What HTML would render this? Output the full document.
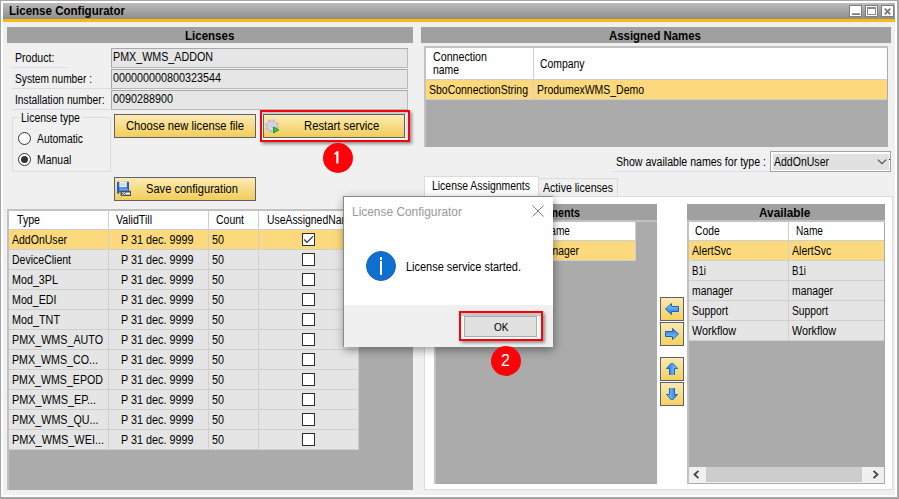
<!DOCTYPE html>
<html><head><meta charset="utf-8"><title>License Configurator</title>
<style>
*{box-sizing:border-box;margin:0;padding:0}
html,body{width:899px;height:499px;overflow:hidden;background:#fff}
body{font-family:"Liberation Sans",sans-serif;font-size:12px;color:#000;position:relative}
.a{position:absolute}
.t{position:absolute;white-space:nowrap;line-height:14px;transform-origin:0 50%}
.tb{position:absolute;top:5px;width:13px;height:12px;background:#fff;border:1px solid #7d7d7d}
.hdr{position:absolute;background:#a0a0a0;height:16px}
.hdr span{position:absolute;left:0;right:0;text-align:center;font-weight:bold;font-size:13px;line-height:16px;top:0}
.fld{position:absolute;left:111px;width:297px;height:20px;background:#e6e6e6;border:1px solid #b7baba;border-top-color:#a6a9a9;border-left-color:#a6a9a9}
.btn{position:absolute;height:24px;border:1px solid #5f6068;background:linear-gradient(#fbeab4,#f7dc86 50%,#f2cd5a)}
.grid{position:absolute;background:#ababab;border-top:2px solid #c2c2c2;border-left:2px solid #c2c2c2}
.c{position:absolute;background:#e5e5e5}
.h{background:#fff}
.s{background:#fcd97c}
.cb{position:absolute;width:13px;height:13px;border:1px solid #2e2e2e;background:#fff}
.red{position:absolute;border:2px solid #fb0007;box-shadow:2px 2px 3px rgba(0,0,0,.4)}
.circ{position:absolute;width:30px;height:30px;border-radius:50%;background:#fd0209;color:#fff;text-align:center;font-size:16px;line-height:30px}
.arrow{position:absolute;left:660px;width:24px;height:24px;border:1px solid #5f6068;background:linear-gradient(#fbe9b0,#f4d160)}
</style></head><body>
<div class="a" style="left:0;top:0;width:899px;height:499px;background:#a5a5a5"></div>
<div class="a" style="left:1px;top:1px;width:896px;height:496px;background:#fff"></div>
<div class="a" style="left:3px;top:3px;width:892px;height:16px;background:linear-gradient(#bbb,#8d8d8d)"></div>
<div class="a" style="left:3px;top:19px;width:892px;height:3px;background:#fdb913"></div>
<div class="a" style="left:3px;top:22px;width:892px;height:473px;background:#f0f0f0"></div>
<div class="t" style="left:9px;top:4px;font-size:12px;transform:scaleX(0.961);font-weight:bold;">License Configurator</div>
<div class="tb" style="left:849px"><div class="a" style="left:2px;top:8px;width:8px;height:1px;background:#7d7d7d;box-shadow:0 -1px 0 #a0a0a0"></div></div>
<div class="tb" style="left:865px"><div class="a" style="left:1px;top:1px;width:9px;height:8px;border:1px solid #8a8a8a;border-top:2px solid #8a8a8a"></div></div>
<div class="tb" style="left:881px"><svg class="a" style="left:2px;top:2px" width="7" height="7" viewBox="0 0 7 7"><path d="M0.7 0.7 L6.3 6.3 M6.3 0.7 L0.7 6.3" stroke="#7a7a7a" stroke-width="1.9"/></svg></div>
<div class="hdr" style="left:7px;top:27px;width:406px"></div>
<div class="t" style="left:184.5px;top:29px;font-size:12px;transform:scaleX(0.96);font-weight:bold;">Licenses</div>
<div class="t" style="left:15px;top:51px;font-size:12px;transform:scaleX(0.881);">Product:</div>
<div class="t" style="left:15px;top:72px;font-size:12px;transform:scaleX(0.849);">System number :</div>
<div class="t" style="left:15px;top:93px;font-size:12px;transform:scaleX(0.855);">Installation number:</div>
<div class="a" style="left:12px;top:67px;width:55px;height:1px;background:#d9dde2"></div>
<div class="a" style="left:12px;top:88px;width:99px;height:1px;background:#d9dde2"></div>
<div class="a" style="left:12px;top:109px;width:99px;height:1px;background:#d9dde2"></div>
<div class="fld" style="top:48px"></div>
<div class="t" style="left:113px;top:50px;font-size:12px;transform:scaleX(0.893);">PMX_WMS_ADDON</div>
<div class="fld" style="top:69px"></div>
<div class="t" style="left:113px;top:71px;font-size:12px;transform:scaleX(0.899);">000000000800323544</div>
<div class="fld" style="top:90px"></div>
<div class="t" style="left:113px;top:92px;font-size:12px;transform:scaleX(0.899);">0090288900</div>
<div class="a" style="left:12px;top:117px;width:99px;height:55px;border:1px solid #dcdcdc"></div>
<div class="a" style="left:19px;top:111px;width:64px;height:14px;background:#f0f0f0"></div>
<div class="t" style="left:21px;top:111px;font-size:12px;transform:scaleX(0.875);">License type</div>
<div class="a" style="left:18px;top:132px;width:13px;height:13px;border:1px solid #333;border-radius:50%;background:#fff"></div>
<div class="a" style="left:18px;top:153px;width:13px;height:13px;border:1px solid #333;border-radius:50%;background:#fff"></div>
<div class="a" style="left:21px;top:156px;width:7px;height:7px;border-radius:50%;background:#333"></div>
<div class="t" style="left:37px;top:132px;font-size:12px;transform:scaleX(0.862);">Automatic</div>
<div class="t" style="left:37px;top:153px;font-size:12px;transform:scaleX(0.871);">Manual</div>
<div class="btn" style="left:114px;top:114px;width:142px"></div>
<div class="t" style="left:126px;top:119px;font-size:12px;transform:scaleX(0.936);">Choose new license file</div>
<div class="btn" style="left:263px;top:114px;width:142px"></div>
<div class="t" style="left:304px;top:119px;font-size:12px;transform:scaleX(0.94);">Restart service</div>
<div class="btn" style="left:114px;top:177px;width:142px"></div>
<div class="t" style="left:146px;top:182px;font-size:12px;transform:scaleX(0.925);">Save configuration</div>
<svg class="a" style="left:265px;top:119px" width="15" height="15" viewBox="0 0 15 15"><circle cx="7" cy="7" r="5.6" fill="none" stroke="#bcbce4" stroke-width="2.6" stroke-dasharray="2.3 2.1"/><circle cx="7" cy="7" r="4.8" fill="#d9d9f4" stroke="#a4a4d0" stroke-width="0.6"/><circle cx="7" cy="6.6" r="1.7" fill="#f8e3a0" stroke="#9d9dc8" stroke-width="0.5"/><path d="M8.6 8 L13.8 10.9 L8.6 13.9 Z" fill="#49c23e" stroke="#1d8a1c" stroke-width="0.9"/></svg>
<svg class="a" style="left:116px;top:181px" width="16" height="16" viewBox="0 0 16 16"><path d="M1 1.2 Q1 0.7 1.6 0.7 L12.4 0.7 Q13 0.7 13 1.2 L13 11.5 L3 11.5 L3 12.8 L1.8 12.8 L1 12 Z" fill="#1a5fd6"/><rect x="3.3" y="0.7" width="7.5" height="5.6" fill="#f3f3f3"/><rect x="4.3" y="2" width="5.5" height="3" fill="#d8d8d8"/><rect x="3.3" y="7.3" width="8.5" height="2.5" fill="#6ea2ec"/><rect x="4.6" y="9.8" width="10.4" height="5.2" fill="#505050"/><path d="M6.2 11 L8.8 14 M8.8 11 L6.2 14" stroke="#fff" stroke-width="0.9"/><rect x="9.4" y="11.6" width="4.6" height="2" fill="#fff"/><rect x="5.6" y="10.6" width="8.8" height="3.8" fill="none"/></svg>
<div class="a" style="left:262px;top:112px;width:146px;height:2px;background:#c6c9c9"></div>
<div class="a" style="left:262px;top:138px;width:146px;height:2px;background:#fff"></div>
<div class="a" style="left:406px;top:113px;width:2px;height:25px;background:#e4e6e6"></div>
<div class="red" style="left:260px;top:110px;width:150px;height:32px"></div>
<div class="circ" style="left:323.3px;top:142.6px"><svg class="a" style="left:0;top:0" width="30" height="30" viewBox="0 0 30 30"><path d="M13.8 8.3 L15.5 8.3 L15.5 20.4 L13.3 20.4 L13.3 10.9 L11.2 11.8 L11.2 10.2 Q13 9.5 13.8 8.3 Z" fill="#fff"/></svg></div>
<div class="grid" style="left:7px;top:209px;width:406px;height:281px"></div>
<div class="a" style="left:9px;top:211px;width:350px;height:239px;background:#cfcfcf"></div>
<div class="c h" style="left:9px;top:211px;width:99px;height:18px"></div>
<div class="t" style="left:17px;top:213px;font-size:12px;transform:scaleX(0.884);">Type</div>
<div class="c s" style="left:9px;top:230px;width:99px;height:19px"></div>
<div class="c" style="left:9px;top:250px;width:99px;height:19px"></div>
<div class="c" style="left:9px;top:270px;width:99px;height:19px"></div>
<div class="c" style="left:9px;top:290px;width:99px;height:19px"></div>
<div class="c" style="left:9px;top:310px;width:99px;height:19px"></div>
<div class="c" style="left:9px;top:330px;width:99px;height:19px"></div>
<div class="c" style="left:9px;top:350px;width:99px;height:19px"></div>
<div class="c" style="left:9px;top:370px;width:99px;height:19px"></div>
<div class="c" style="left:9px;top:390px;width:99px;height:19px"></div>
<div class="c" style="left:9px;top:410px;width:99px;height:19px"></div>
<div class="c" style="left:9px;top:430px;width:99px;height:19px"></div>
<div class="c h" style="left:109px;top:211px;width:99px;height:18px"></div>
<div class="t" style="left:116px;top:213px;font-size:12px;transform:scaleX(0.885);">ValidTill</div>
<div class="c s" style="left:109px;top:230px;width:99px;height:19px"></div>
<div class="c" style="left:109px;top:250px;width:99px;height:19px"></div>
<div class="c" style="left:109px;top:270px;width:99px;height:19px"></div>
<div class="c" style="left:109px;top:290px;width:99px;height:19px"></div>
<div class="c" style="left:109px;top:310px;width:99px;height:19px"></div>
<div class="c" style="left:109px;top:330px;width:99px;height:19px"></div>
<div class="c" style="left:109px;top:350px;width:99px;height:19px"></div>
<div class="c" style="left:109px;top:370px;width:99px;height:19px"></div>
<div class="c" style="left:109px;top:390px;width:99px;height:19px"></div>
<div class="c" style="left:109px;top:410px;width:99px;height:19px"></div>
<div class="c" style="left:109px;top:430px;width:99px;height:19px"></div>
<div class="c h" style="left:209px;top:211px;width:49px;height:18px"></div>
<div class="t" style="left:216px;top:213px;font-size:12px;transform:scaleX(0.874);">Count</div>
<div class="c s" style="left:209px;top:230px;width:49px;height:19px"></div>
<div class="c" style="left:209px;top:250px;width:49px;height:19px"></div>
<div class="c" style="left:209px;top:270px;width:49px;height:19px"></div>
<div class="c" style="left:209px;top:290px;width:49px;height:19px"></div>
<div class="c" style="left:209px;top:310px;width:49px;height:19px"></div>
<div class="c" style="left:209px;top:330px;width:49px;height:19px"></div>
<div class="c" style="left:209px;top:350px;width:49px;height:19px"></div>
<div class="c" style="left:209px;top:370px;width:49px;height:19px"></div>
<div class="c" style="left:209px;top:390px;width:49px;height:19px"></div>
<div class="c" style="left:209px;top:410px;width:49px;height:19px"></div>
<div class="c" style="left:209px;top:430px;width:49px;height:19px"></div>
<div class="c h" style="left:259px;top:211px;width:99px;height:18px"></div>
<div class="t" style="left:266.5px;top:213px;font-size:12px;transform:scaleX(0.865);">UseAssignedNames</div>
<div class="c s" style="left:259px;top:230px;width:99px;height:19px"></div>
<div class="c" style="left:259px;top:250px;width:99px;height:19px"></div>
<div class="c" style="left:259px;top:270px;width:99px;height:19px"></div>
<div class="c" style="left:259px;top:290px;width:99px;height:19px"></div>
<div class="c" style="left:259px;top:310px;width:99px;height:19px"></div>
<div class="c" style="left:259px;top:330px;width:99px;height:19px"></div>
<div class="c" style="left:259px;top:350px;width:99px;height:19px"></div>
<div class="c" style="left:259px;top:370px;width:99px;height:19px"></div>
<div class="c" style="left:259px;top:390px;width:99px;height:19px"></div>
<div class="c" style="left:259px;top:410px;width:99px;height:19px"></div>
<div class="c" style="left:259px;top:430px;width:99px;height:19px"></div>
<div class="t" style="left:12.3px;top:233px;font-size:12px;transform:scaleX(0.877);">AddOnUser</div>
<div class="t" style="left:121.3px;top:233px;font-size:12px;transform:scaleX(0.9);">P 31 dec. 9999</div>
<div class="t" style="left:211.8px;top:233px;font-size:12px;transform:scaleX(0.898);">50</div>
<div class="cb" style="left:302px;top:233px"></div>
<div class="t" style="left:12.3px;top:253px;font-size:12px;transform:scaleX(0.876);">DeviceClient</div>
<div class="t" style="left:121.3px;top:253px;font-size:12px;transform:scaleX(0.9);">P 31 dec. 9999</div>
<div class="t" style="left:211.8px;top:253px;font-size:12px;transform:scaleX(0.898);">50</div>
<div class="cb" style="left:302px;top:253px"></div>
<div class="t" style="left:12.3px;top:273px;font-size:12px;transform:scaleX(0.895);">Mod_3PL</div>
<div class="t" style="left:121.3px;top:273px;font-size:12px;transform:scaleX(0.9);">P 31 dec. 9999</div>
<div class="t" style="left:211.8px;top:273px;font-size:12px;transform:scaleX(0.898);">50</div>
<div class="cb" style="left:302px;top:273px"></div>
<div class="t" style="left:12.3px;top:293px;font-size:12px;transform:scaleX(0.889);">Mod_EDI</div>
<div class="t" style="left:121.3px;top:293px;font-size:12px;transform:scaleX(0.9);">P 31 dec. 9999</div>
<div class="t" style="left:211.8px;top:293px;font-size:12px;transform:scaleX(0.898);">50</div>
<div class="cb" style="left:302px;top:293px"></div>
<div class="t" style="left:12.3px;top:313px;font-size:12px;transform:scaleX(0.9);">Mod_TNT</div>
<div class="t" style="left:121.3px;top:313px;font-size:12px;transform:scaleX(0.9);">P 31 dec. 9999</div>
<div class="t" style="left:211.8px;top:313px;font-size:12px;transform:scaleX(0.898);">50</div>
<div class="cb" style="left:302px;top:313px"></div>
<div class="t" style="left:12.3px;top:333px;font-size:12px;transform:scaleX(0.894);">PMX_WMS_AUTO</div>
<div class="t" style="left:121.3px;top:333px;font-size:12px;transform:scaleX(0.9);">P 31 dec. 9999</div>
<div class="t" style="left:211.8px;top:333px;font-size:12px;transform:scaleX(0.898);">50</div>
<div class="cb" style="left:302px;top:333px"></div>
<div class="t" style="left:12.3px;top:353px;font-size:12px;transform:scaleX(0.889);">PMX_WMS_CO...</div>
<div class="t" style="left:121.3px;top:353px;font-size:12px;transform:scaleX(0.9);">P 31 dec. 9999</div>
<div class="t" style="left:211.8px;top:353px;font-size:12px;transform:scaleX(0.898);">50</div>
<div class="cb" style="left:302px;top:353px"></div>
<div class="t" style="left:12.3px;top:373px;font-size:12px;transform:scaleX(0.886);">PMX_WMS_EPOD</div>
<div class="t" style="left:121.3px;top:373px;font-size:12px;transform:scaleX(0.9);">P 31 dec. 9999</div>
<div class="t" style="left:211.8px;top:373px;font-size:12px;transform:scaleX(0.898);">50</div>
<div class="cb" style="left:302px;top:373px"></div>
<div class="t" style="left:12.3px;top:393px;font-size:12px;transform:scaleX(0.902);">PMX_WMS_EP...</div>
<div class="t" style="left:121.3px;top:393px;font-size:12px;transform:scaleX(0.9);">P 31 dec. 9999</div>
<div class="t" style="left:211.8px;top:393px;font-size:12px;transform:scaleX(0.898);">50</div>
<div class="cb" style="left:302px;top:393px"></div>
<div class="t" style="left:12.3px;top:413px;font-size:12px;transform:scaleX(0.895);">PMX_WMS_QU...</div>
<div class="t" style="left:121.3px;top:413px;font-size:12px;transform:scaleX(0.9);">P 31 dec. 9999</div>
<div class="t" style="left:211.8px;top:413px;font-size:12px;transform:scaleX(0.898);">50</div>
<div class="cb" style="left:302px;top:413px"></div>
<div class="t" style="left:12.3px;top:433px;font-size:12px;transform:scaleX(0.908);">PMX_WMS_WEI...</div>
<div class="t" style="left:121.3px;top:433px;font-size:12px;transform:scaleX(0.9);">P 31 dec. 9999</div>
<div class="t" style="left:211.8px;top:433px;font-size:12px;transform:scaleX(0.898);">50</div>
<div class="cb" style="left:302px;top:433px"></div>
<svg class="a" style="left:302px;top:233px" width="13" height="13" viewBox="0 0 13 13"><path d="M2.3 6.5 L4.9 9.4 L11 3.4" stroke="#333" stroke-width="1.3" fill="none"/></svg>
<div class="hdr" style="left:421px;top:27px;width:470px"></div>
<div class="t" style="left:609px;top:29px;font-size:12px;transform:scaleX(0.951);font-weight:bold;">Assigned Names</div>
<div class="grid" style="left:424px;top:46px;width:464px;height:101px"></div>
<div class="a" style="left:426px;top:48px;width:461px;height:52px;background:#cfcfcf"></div>
<div class="c h" style="left:426px;top:48px;width:107px;height:31px"></div>
<div class="c h" style="left:534px;top:48px;width:353px;height:31px"></div>
<div class="c s" style="left:426px;top:80px;width:107px;height:19px"></div>
<div class="c s" style="left:534px;top:80px;width:353px;height:19px"></div>
<div class="t" style="left:432.7px;top:50px;font-size:12px;transform:scaleX(0.889);">Connection</div>
<div class="t" style="left:432.7px;top:63px;font-size:12px;transform:scaleX(0.866);">name</div>
<div class="t" style="left:540.3px;top:57px;font-size:12px;transform:scaleX(0.868);">Company</div>
<div class="t" style="left:429px;top:83px;font-size:12px;transform:scaleX(0.873);">SboConnectionString</div>
<div class="t" style="left:537px;top:83px;font-size:12px;transform:scaleX(0.872);">ProdumexWMS_Demo</div>
<div class="t" style="left:616px;top:155px;font-size:12px;transform:scaleX(0.882);">Show available names for type :</div>
<div class="a" style="left:613px;top:171px;width:157px;height:1px;background:#d9dde2"></div>
<div class="a" style="left:770px;top:151px;width:121px;height:21px;border:1px solid #a3a3a3;background:#fff"></div>
<div class="a" style="left:773px;top:154px;width:116px;height:16px;background:#e1e1e1"></div>
<div class="a" style="left:889px;top:159px;width:1px;height:1px;background:#222"></div>
<div class="t" style="left:774px;top:155px;font-size:12px;transform:scaleX(0.877);">AddOnUser</div>
<svg class="a" style="left:877px;top:159px" width="10" height="6" viewBox="0 0 10 6"><path d="M0.8 0.6 L5 4.6 L9.2 0.6" stroke="#505050" stroke-width="1.2" fill="none"/></svg>
<div class="a" style="left:424px;top:196px;width:469px;height:294px;background:#fff;border:1px solid #dcdcdc"></div>
<div class="a" style="left:424px;top:176px;width:115px;height:21px;background:#fff;border:1px solid #dcdcdc;border-bottom:none"></div>
<div class="a" style="left:539px;top:178px;width:79px;height:18px;background:#f0f0f0;border:1px solid #dcdcdc;border-left:none;border-bottom:none"></div>
<div class="t" style="left:432px;top:179px;font-size:12px;transform:scaleX(0.869);">License Assignments</div>
<div class="t" style="left:543px;top:181px;font-size:12px;transform:scaleX(0.882);">Active licenses</div>
<div class="hdr" style="left:434px;top:204px;width:223px"></div>
<div class="t" style="left:512.5px;top:206px;font-size:12px;transform:scaleX(0.889);font-weight:bold;">Assignments</div>
<div class="grid" style="left:434px;top:220px;width:223px;height:264px"></div>
<div class="a" style="left:436px;top:222px;width:200px;height:39px;background:#cfcfcf"></div>
<div class="c h" style="left:436px;top:222px;width:199px;height:18px"></div>
<div class="c s" style="left:436px;top:241px;width:199px;height:19px"></div>
<div class="t" style="left:543px;top:224px;font-size:12px;transform:scaleX(0.843);">Name</div>
<div class="t" style="left:538px;top:244px;font-size:12px;transform:scaleX(0.865);">manager</div>
<div class="hdr" style="left:687px;top:204px;width:198px"></div>
<div class="t" style="left:759.4px;top:206px;font-size:12px;transform:scaleX(0.982);font-weight:bold;">Available</div>
<div class="grid" style="left:687px;top:220px;width:198px;height:264px"></div>
<div class="a" style="left:689px;top:222px;width:195px;height:119px;background:#cfcfcf"></div>
<div class="c h" style="left:689px;top:222px;width:99px;height:18px"></div>
<div class="c s" style="left:689px;top:241px;width:99px;height:19px"></div>
<div class="c" style="left:689px;top:261px;width:99px;height:19px"></div>
<div class="c" style="left:689px;top:281px;width:99px;height:19px"></div>
<div class="c" style="left:689px;top:301px;width:99px;height:19px"></div>
<div class="c" style="left:689px;top:321px;width:99px;height:19px"></div>
<div class="c h" style="left:789px;top:222px;width:95px;height:18px"></div>
<div class="c s" style="left:789px;top:241px;width:95px;height:19px"></div>
<div class="c" style="left:789px;top:261px;width:95px;height:19px"></div>
<div class="c" style="left:789px;top:281px;width:95px;height:19px"></div>
<div class="c" style="left:789px;top:301px;width:95px;height:19px"></div>
<div class="c" style="left:789px;top:321px;width:95px;height:19px"></div>
<div class="t" style="left:695.4px;top:224px;font-size:12px;transform:scaleX(0.861);">Code</div>
<div class="t" style="left:796.4px;top:224px;font-size:12px;transform:scaleX(0.843);">Name</div>
<div class="t" style="left:692px;top:244px;font-size:12px;transform:scaleX(0.879);">AlertSvc</div>
<div class="t" style="left:792px;top:244px;font-size:12px;transform:scaleX(0.879);">AlertSvc</div>
<div class="t" style="left:692px;top:264px;font-size:12px;transform:scaleX(0.807);">B1i</div>
<div class="t" style="left:792px;top:264px;font-size:12px;transform:scaleX(0.807);">B1i</div>
<div class="t" style="left:692px;top:284px;font-size:12px;transform:scaleX(0.865);">manager</div>
<div class="t" style="left:792px;top:284px;font-size:12px;transform:scaleX(0.865);">manager</div>
<div class="t" style="left:692px;top:304px;font-size:12px;transform:scaleX(0.857);">Support</div>
<div class="t" style="left:792px;top:304px;font-size:12px;transform:scaleX(0.857);">Support</div>
<div class="t" style="left:692px;top:324px;font-size:12px;transform:scaleX(0.896);">Workflow</div>
<div class="t" style="left:792px;top:324px;font-size:12px;transform:scaleX(0.896);">Workflow</div>
<div class="a" style="left:689px;top:467px;width:195px;height:16px;background:#f0f0f0"></div>
<div class="a" style="left:706px;top:467px;width:156px;height:15px;background:#cdcdcd"></div>
<svg class="a" style="left:693px;top:470px" width="7" height="9" viewBox="0 0 7 9"><path d="M5.5 0.8 L1.5 4.5 L5.5 8.2" stroke="#444" stroke-width="1.8" fill="none"/></svg>
<svg class="a" style="left:872px;top:470px" width="7" height="9" viewBox="0 0 7 9"><path d="M1.5 0.8 L5.5 4.5 L1.5 8.2" stroke="#444" stroke-width="1.8" fill="none"/></svg>
<div class="arrow" style="top:297px"><svg class="a" style="left:4px;top:5px" width="14" height="12" viewBox="0 0 14 12"><defs><linearGradient id="bg0" x1="0" y1="0" x2="0" y2="1"><stop offset="0" stop-color="#8fd0ff"/><stop offset="1" stop-color="#1a72e0"/></linearGradient></defs><path d="M0.5 6 L6.5 0.5 L6.5 3.5 L13.5 3.5 L13.5 8.5 L6.5 8.5 L6.5 11.5 Z" fill="url(#bg0)" stroke="#1762c4" stroke-width="1" transform=""/></svg></div>
<div class="arrow" style="top:322px"><svg class="a" style="left:4px;top:5px" width="14" height="12" viewBox="0 0 14 12"><defs><linearGradient id="bg1" x1="0" y1="0" x2="0" y2="1"><stop offset="0" stop-color="#8fd0ff"/><stop offset="1" stop-color="#1a72e0"/></linearGradient></defs><path d="M0.5 6 L6.5 0.5 L6.5 3.5 L13.5 3.5 L13.5 8.5 L6.5 8.5 L6.5 11.5 Z" fill="url(#bg1)" stroke="#1762c4" stroke-width="1" transform="rotate(180 7 6)"/></svg></div>
<div class="arrow" style="top:357px"><svg class="a" style="left:4px;top:5px" width="14" height="12" viewBox="0 0 14 12"><defs><linearGradient id="bg2" x1="0" y1="0" x2="0" y2="1"><stop offset="0" stop-color="#8fd0ff"/><stop offset="1" stop-color="#1a72e0"/></linearGradient></defs><path d="M0.5 6 L6.5 0.5 L6.5 3.5 L13.5 3.5 L13.5 8.5 L6.5 8.5 L6.5 11.5 Z" fill="url(#bg2)" stroke="#1762c4" stroke-width="1" transform="rotate(90 7 6)"/></svg></div>
<div class="arrow" style="top:382px"><svg class="a" style="left:4px;top:5px" width="14" height="12" viewBox="0 0 14 12"><defs><linearGradient id="bg3" x1="0" y1="0" x2="0" y2="1"><stop offset="0" stop-color="#8fd0ff"/><stop offset="1" stop-color="#1a72e0"/></linearGradient></defs><path d="M0.5 6 L6.5 0.5 L6.5 3.5 L13.5 3.5 L13.5 8.5 L6.5 8.5 L6.5 11.5 Z" fill="url(#bg3)" stroke="#1762c4" stroke-width="1" transform="rotate(270 7 6)"/></svg></div>
<div class="a" style="left:343px;top:196px;width:210px;height:151px;background:#fff;box-shadow:1px 3px 9px rgba(0,0,0,.4)"></div>
<div class="a" style="left:343px;top:196px;width:210px;height:151px;background:#fff;border-left:1px solid #8a8a8a;border-top:1px solid #8a8a8a"></div>
<div class="a" style="left:344px;top:305px;width:209px;height:42px;background:#f0f0f0"></div>
<div class="t" style="left:352px;top:205px;font-size:12px;transform:scaleX(0.993);color:#999;">License Configurator</div>
<svg class="a" style="left:532px;top:205px" width="12" height="12" viewBox="0 0 12 12"><path d="M0.5 0.5 L11.5 11.5 M11.5 0.5 L0.5 11.5" stroke="#7a7a7a" stroke-width="1"/></svg>
<div class="a" style="left:366px;top:251px;width:30px;height:30px;border-radius:50%;background:#0c6fd2;border:1px solid #2a62a8"></div>
<div class="a" style="left:380px;top:257px;width:2px;height:3px;background:#fff"></div>
<div class="a" style="left:380px;top:261px;width:2px;height:14px;background:#fff"></div>
<div class="t" style="left:406px;top:260px;font-size:12px;transform:scaleX(0.912);">License service started.</div>
<div class="a" style="left:461px;top:313px;width:80px;height:3px;background:#c3c9c9"></div>
<div class="a" style="left:461px;top:316px;width:80px;height:23px;background:#f7f9f9"></div>
<div class="a" style="left:464px;top:316px;width:73px;height:21px;background:#e1e1e1;border:1px solid #adadad"></div>
<div class="t" style="left:493.6px;top:320px;font-size:11.5px;transform:scaleX(0.872);">OK</div>
<div class="red" style="left:459px;top:311px;width:84px;height:30px"></div>
<div class="circ" style="left:490.5px;top:345.5px">2</div>
</body></html>
